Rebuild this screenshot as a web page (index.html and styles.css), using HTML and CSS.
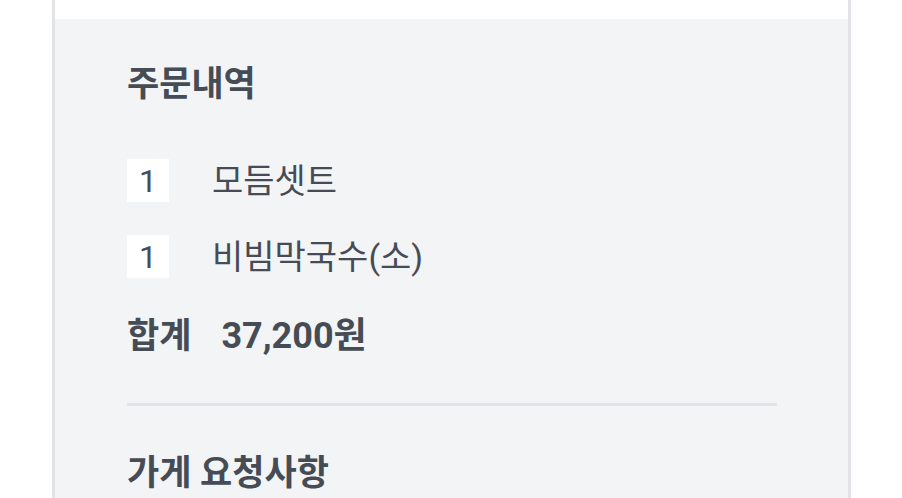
FILE: index.html
```html
<!DOCTYPE html>
<html lang="ko">
<head>
<meta charset="utf-8">
<link rel="stylesheet" href="styles.css">
</head>
<body>
<div class="page">
  <div class="top-strip"></div>
  <section class="order">
    <h2 class="title">주문내역</h2>
    <ul class="items">
      <li class="item"><span class="qty">1</span><span class="name">모듬셋트</span></li>
      <li class="item"><span class="qty">1</span><span class="name">비빔막국수(소)</span></li>
    </ul>
    <div class="total"><span class="total-label">합계</span><span class="total-value">37,200원</span></div>
    <hr class="divider">
    <h2 class="title request">가게 요청사항</h2>
  </section>
</div>
</body>
</html>
```

FILE: styles.css
```css
* { box-sizing: border-box; }
html, body { margin: 0; padding: 0; background: #ffffff; }
body {
  font-family: Roboto, "Noto Sans CJK KR", sans-serif;
  color: #464c55;
  height: 498px;
  overflow: hidden;
}
.page {
  margin-left: 52px;
  width: 799px;
  border-left: 3px solid #e1e3e7;
  border-right: 3px solid #e1e3e7;
  min-height: 498px;
  background: #f3f4f6;
}
.top-strip {
  height: 19px;
  background: #ffffff;
}
.order {
  padding: 42px 71px 0 72px;
}
.title {
  margin: 0;
  font-size: 35px;
  font-weight: 700;
  line-height: 48px;
}
.items {
  list-style: none;
  margin: 50px 0 0;
  padding: 0;
  display: flex;
  flex-direction: column;
  gap: 33px;
}
.item {
  display: flex;
  align-items: center;
  height: 43px;
}
.qty {
  width: 42px;
  height: 43px;
  background: #ffffff;
  display: flex;
  align-items: center;
  justify-content: center;
  margin-right: 43px;
  font-size: 32px;
  line-height: 1;
}
.name {
  font-size: 34px;
  line-height: 1;
}
.total {
  margin-top: 34px;
  height: 48px;
  font-size: 35px;
  font-weight: 700;
  line-height: 48px;
  display: flex;
  align-items: baseline;
  gap: 30px;
}
.total-value {
  font-size: 36px;
}
.divider {
  margin: 43px 0 0;
  border: 0;
  height: 3px;
  background: #e1e3e7;
}
.request {
  margin-top: 44px;
}
```
